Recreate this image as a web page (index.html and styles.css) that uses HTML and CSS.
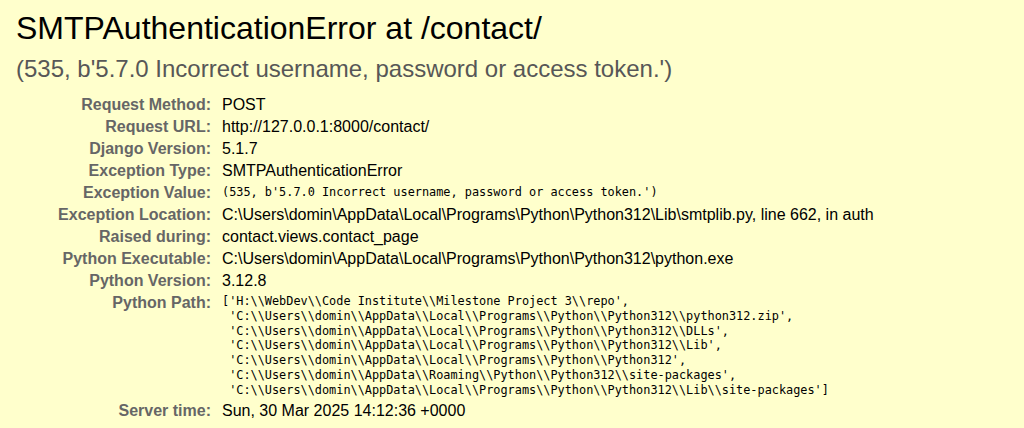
FILE: index.html
```html
<!DOCTYPE html>
<html>
<head>
<meta charset="utf-8">
<title>SMTPAuthenticationError at /contact/</title>
<link rel="stylesheet" href="styles.css">
</head>
<body>
<div class="summary">
  <h1 class="title">SMTPAuthenticationError at /contact/</h1>
  <pre class="exception-value">(535, b'5.7.0 Incorrect username, password or access token.')</pre>
  <table class="meta">
    <tbody>
      <tr><th>Request Method:</th><td>POST</td></tr>
      <tr><th>Request URL:</th><td>http://127.0.0.1:8000/contact/</td></tr>
      <tr><th>Django Version:</th><td>5.1.7</td></tr>
      <tr><th>Exception Type:</th><td>SMTPAuthenticationError</td></tr>
      <tr><th>Exception Value:</th><td class="value-cell"><pre class="mono">(535, b'5.7.0 Incorrect username, password or access token.')</pre></td></tr>
      <tr><th>Exception Location:</th><td><span class="fname">C:\Users\domin\AppData\Local\Programs\Python\Python312\Lib\smtplib.py</span>, line 662, in auth</td></tr>
      <tr><th>Raised during:</th><td>contact.views.contact_page</td></tr>
      <tr><th>Python Executable:</th><td>C:\Users\domin\AppData\Local\Programs\Python\Python312\python.exe</td></tr>
      <tr><th>Python Version:</th><td>3.12.8</td></tr>
      <tr><th>Python Path:</th><td><pre class="mono">['H:\\WebDev\\Code Institute\\Milestone Project 3\\repo',
 'C:\\Users\\domin\\AppData\\Local\\Programs\\Python\\Python312\\python312.zip',
 'C:\\Users\\domin\\AppData\\Local\\Programs\\Python\\Python312\\DLLs',
 'C:\\Users\\domin\\AppData\\Local\\Programs\\Python\\Python312\\Lib',
 'C:\\Users\\domin\\AppData\\Local\\Programs\\Python\\Python312',
 'C:\\Users\\domin\\AppData\\Roaming\\Python\\Python312\\site-packages',
 'C:\\Users\\domin\\AppData\\Local\\Programs\\Python\\Python312\\Lib\\site-packages']</pre></td></tr>
      <tr><th>Server time:</th><td>Sun, 30 Mar 2025 14:12:36 +0000</td></tr>
    </tbody>
  </table>
</div>
</body>
</html>
```
FILE: styles.css
```css
html, body {
  margin: 0;
  padding: 0;
}
body {
  font-family: "Liberation Sans", Arial, sans-serif;
  font-size: 16px;
  background: #ffffcc;
  color: #000;
  height: 428px;
  overflow: hidden;
}
.summary {
  background: #ffffcc;
  padding: 10px 16px;
}
.title {
  margin: 0;
  font-size: 32px;
  font-weight: normal;
  line-height: normal;
}
.exception-value {
  font-family: "Liberation Sans", Arial, sans-serif;
  color: #575757;
  font-size: 24px;
  margin: 8px 0 11px;
  white-space: pre-wrap;
}
.meta {
  border: none;
  border-collapse: collapse;
  background: transparent;
  width: 100%;
}
.meta th,
.meta td {
  vertical-align: top;
  padding: 2px 3px;
}
.meta th {
  width: 192px;
  text-align: right;
  color: #666;
  font-weight: bold;
  padding-right: 8px;
}
.meta td.value-cell {
  padding-top: 3px;
}
.mono {
  margin: 0;
  font-family: "DejaVu Sans Mono", monospace;
  font-size: 11.86px;
  line-height: 14.8px;
  white-space: pre-wrap;
}
```
